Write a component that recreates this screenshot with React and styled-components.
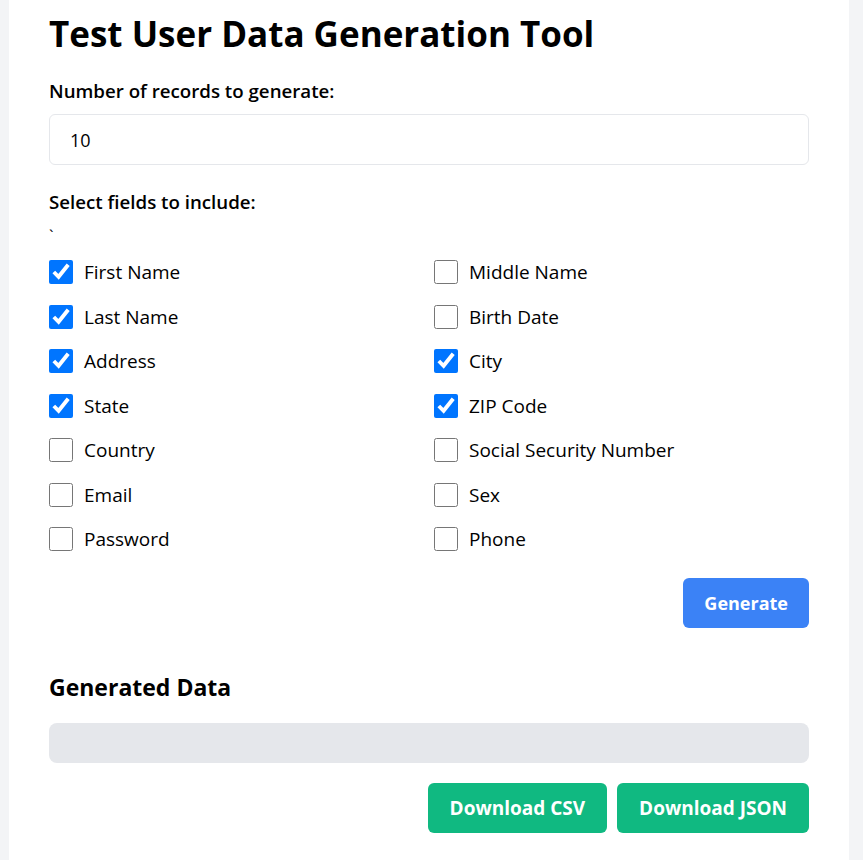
import React, { useState } from 'react'
import styled, { createGlobalStyle } from 'styled-components'

const GlobalStyle = createGlobalStyle`
  html, body {
    margin: 0;
    padding: 0;
    background: #f3f4f6;
  }
  body {
    font-family: "Open Sans", "Noto Sans", sans-serif;
    color: #000;
  }
`

const Page = styled.div`
  padding-left: 9px;
`

const Card = styled.div`
  width: 840px;
  min-height: 860px;
  box-sizing: border-box;
  background: #fff;
  padding: 12px 40px 40px;
`

const Title = styled.h1`
  margin: 0;
  font-size: 35px;
  line-height: 44px;
  font-weight: 700;
`

const Label = styled.label`
  display: block;
  font-size: 18.7px;
  line-height: 24px;
  font-weight: 600;
  margin-top: ${p => p.$top || 0}px;
`

const NumberInput = styled.input`
  display: block;
  width: 100%;
  box-sizing: border-box;
  height: 51px;
  margin-top: 11px;
  padding: 0 20px;
  border: 1px solid #e5e7eb;
  border-radius: 6px;
  font-family: inherit;
  font-size: 18px;
  color: #000;
  outline: none;
`

const Stray = styled.div`
  font-size: 16px;
  line-height: 24px;
  height: 24px;
  padding-top: 4px;
  margin-top: 6px;
  box-sizing: border-box;
`

const FieldGrid = styled.div`
  display: grid;
  grid-template-columns: 1fr 1fr;
  column-gap: 10px;
  row-gap: 16px;
  margin-top: 14px;
`

const Field = styled.label`
  display: flex;
  align-items: center;
  gap: 11px;
  height: 28.5px;
  font-size: 19px;
  cursor: pointer;
`

const Box = styled.input`
  width: 24px;
  height: 24px;
  margin: 0;
  flex: none;
`

const Actions = styled.div`
  display: flex;
  justify-content: flex-end;
  gap: 10px;
  margin-top: ${p => p.$top || 0}px;
`

const Button = styled.button`
  height: 50px;
  padding: 0 ${p => (p.$green ? 22 : 21)}px;
  border: none;
  border-radius: 6px;
  background: ${p => (p.$green ? '#10b981' : '#3b82f6')};
  color: #fff;
  font-family: inherit;
  font-size: ${p => (p.$green ? 19 : 18)}px;
  font-weight: 700;
  cursor: pointer;
`

const SubTitle = styled.h2`
  margin: 41px 0 0;
  font-size: 23px;
  line-height: 36px;
  font-weight: 700;
`

const Output = styled.pre`
  margin: 18px 0 0;
  height: 40px;
  box-sizing: border-box;
  background: #e5e7eb;
  border-radius: 8px;
`

const fields = [
  ['First Name', true], ['Middle Name', false],
  ['Last Name', true], ['Birth Date', false],
  ['Address', true], ['City', true],
  ['State', true], ['ZIP Code', true],
  ['Country', false], ['Social Security Number', false],
  ['Email', false], ['Sex', false],
  ['Password', false], ['Phone', false],
]

export default function App() {
  const [count, setCount] = useState('10')
  const [checked, setChecked] = useState(() => fields.map(f => f[1]))

  const toggle = i => {
    const next = [...checked]
    next[i] = !next[i]
    setChecked(next)
  }

  return (
    <Page>
      <GlobalStyle />
      <Card>
        <Title>Test User Data Generation Tool</Title>

        <Label $top={23} htmlFor="count">Number of records to generate:</Label>
        <NumberInput id="count" type="text" value={count} onChange={e => setCount(e.target.value)} />

        <Label $top={25}>Select fields to include:</Label>
        <Stray>`</Stray>

        <FieldGrid>
          {fields.map(([name], i) => (
            <Field key={name}>
              <Box type="checkbox" checked={checked[i]} onChange={() => toggle(i)} />
              {name}
            </Field>
          ))}
        </FieldGrid>

        <Actions $top={24}>
          <Button>Generate</Button>
        </Actions>

        <SubTitle>Generated Data</SubTitle>
        <Output></Output>

        <Actions $top={20}>
          <Button $green>Download CSV</Button>
          <Button $green>Download JSON</Button>
        </Actions>
      </Card>
    </Page>
  )
}
